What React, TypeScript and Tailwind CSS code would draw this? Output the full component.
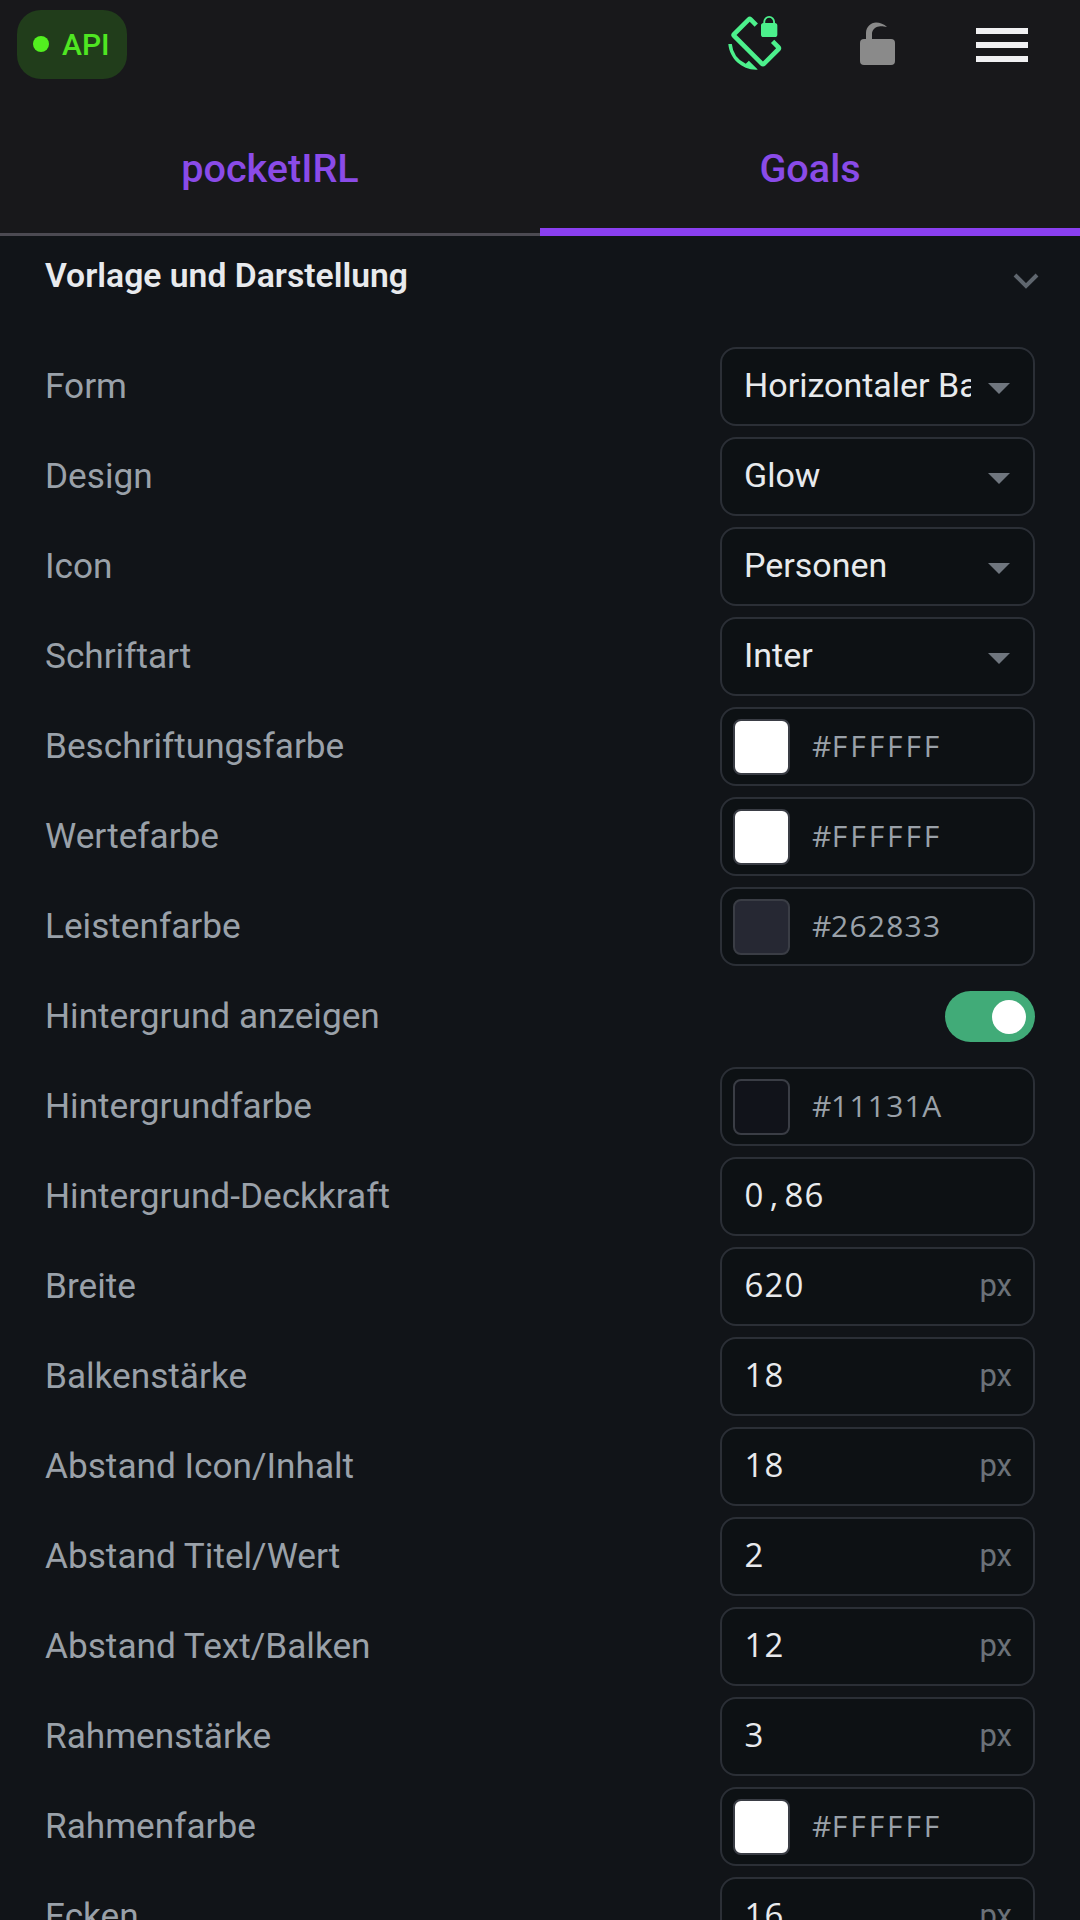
import { MdScreenLockRotation } from "react-icons/md";

type Row =
  | { label: string; kind: "select"; value: string }
  | { label: string; kind: "color"; value: string; swatch: string }
  | { label: string; kind: "toggle" }
  | { label: string; kind: "number"; value: string; unit?: string };

const rows: Row[] = [
  { label: "Form", kind: "select", value: "Horizontaler Balken" },
  { label: "Design", kind: "select", value: "Glow" },
  { label: "Icon", kind: "select", value: "Personen" },
  { label: "Schriftart", kind: "select", value: "Inter" },
  { label: "Beschriftungsfarbe", kind: "color", value: "#FFFFFF", swatch: "bg-white" },
  { label: "Wertefarbe", kind: "color", value: "#FFFFFF", swatch: "bg-white" },
  { label: "Leistenfarbe", kind: "color", value: "#262833", swatch: "bg-[#262833]" },
  { label: "Hintergrund anzeigen", kind: "toggle" },
  { label: "Hintergrundfarbe", kind: "color", value: "#11131A", swatch: "bg-[#11131a]" },
  { label: "Hintergrund-Deckkraft", kind: "number", value: "0,86" },
  { label: "Breite", kind: "number", value: "620", unit: "px" },
  { label: "Balkenstärke", kind: "number", value: "18", unit: "px" },
  { label: "Abstand Icon/Inhalt", kind: "number", value: "18", unit: "px" },
  { label: "Abstand Titel/Wert", kind: "number", value: "2", unit: "px" },
  { label: "Abstand Text/Balken", kind: "number", value: "12", unit: "px" },
  { label: "Rahmenstärke", kind: "number", value: "3", unit: "px" },
  { label: "Rahmenfarbe", kind: "color", value: "#FFFFFF", swatch: "bg-white" },
  { label: "Ecken", kind: "number", value: "16", unit: "px" },
];

// fixed cells, the app's monospace has a plain zero that none of the installed mono fonts have
function Mono({ text, cell }: { text: string; cell: string }) {
  return (
    <span className="flex font-['Open_Sans',sans-serif]">
      {text.split("").map((ch, i) => (
        <span key={i} className={`${cell} text-center`}>
          {ch}
        </span>
      ))}
    </span>
  );
}

function Control({ row }: { row: Row }) {
  if (row.kind === "toggle") {
    return (
      <div className="ml-auto flex h-[51px] w-[90px] items-center justify-end rounded-full bg-[#41ab78] pr-[9px]">
        <div className="h-[34px] w-[34px] rounded-full bg-white" />
      </div>
    );
  }
  const box = "flex h-[79px] w-full items-center rounded-[16px] border-2 border-[#2b2f36] bg-[#0d1114]";
  if (row.kind === "select") {
    return (
      <div className={`${box} pl-[22px] pr-[23px]`}>
        <span className="mb-[3px] w-[227px] overflow-hidden whitespace-nowrap text-[34px] text-[#e8eaed]">{row.value}</span>
        <span className="ml-auto mt-[4px] h-0 w-0 border-x-[11px] border-t-[11px] border-x-transparent border-t-[#6f767e]" />
      </div>
    );
  }
  if (row.kind === "color") {
    return (
      <div className={`${box} pl-[11px]`}>
        <div className={`h-[56px] w-[57px] rounded-[8px] border-2 border-[#3a3d45] ${row.swatch}`} />
        <div className="mb-[3px] ml-[22px] text-[30px] text-[#9aa1a9]">
          <Mono text={row.value} cell="w-[18.4px]" />
        </div>
      </div>
    );
  }
  return (
    <div className={`${box} pl-[22px] pr-[21px]`}>
      <div className="mb-[3px] text-[33px] text-[#e8eaed]">
        <Mono text={row.value} cell="w-[20px]" />
      </div>
      {row.unit && <span className="ml-auto text-[31px] text-[#6b7178]">{row.unit}</span>}
    </div>
  );
}

export default function App() {
  return (
    <div className="h-[1920px] overflow-hidden bg-[#111418] font-['Roboto',sans-serif]">
      <header className="bg-[#18181b]">
        <div className="flex h-[88px] items-center pl-[17px] pr-[52px]">
          <div className="flex h-[69px] w-[110px] items-center gap-[13px] rounded-[24px] bg-[#213d1b] pl-[16px]">
            <span className="h-[16px] w-[16px] rounded-full bg-[#52f01f]" />
            <span className="text-[30px] font-medium text-[#4fe622]">API</span>
          </div>
          <MdScreenLockRotation className="ml-auto h-[56px] w-[56px] text-[#4cf08c]" />
          <svg viewBox="0 0 36 44" className="ml-[78px] h-[44px] w-[36px]">
            <path d="M6 18V11C6 5 11 0.5 16 0.5C20 0.5 24 2 27 5C23 4 21 4 19 4.5C15 5 12 8 12 12V18Z" fill="#8a8a8a" />
            <rect x="0" y="17" width="35" height="26" rx="4" fill="#8a8a8a" />
          </svg>
          <div className="ml-[80px] mt-[2px] flex w-[52px] flex-col gap-[8px]">
            <div className="h-[6px] bg-[#f0f0f2]" />
            <div className="h-[6px] bg-[#f0f0f2]" />
            <div className="h-[6px] bg-[#f0f0f2]" />
          </div>
        </div>
        <div className="flex">
          <div className="flex h-[148px] w-1/2 items-center justify-center border-b-[3px] border-[#4c4a52] pt-[17px] text-[39.6px] font-medium text-[#8a4be8]">
            pocketIRL
          </div>
          <div className="flex h-[148px] w-1/2 items-center justify-center border-b-[8px] border-[#8a3ff0] pt-[22px] text-[39.6px] font-medium text-[#8a4be8]">
            Goals
          </div>
        </div>
      </header>
      <main className="pl-[45px] pr-[45px]">
        <div className="flex h-[76px] items-center justify-between pt-[5px]">
          <h2 className="text-[33.7px] font-semibold text-[#e8eaed]">Vorlage und Darstellung</h2>
          <svg viewBox="0 0 26 16" className="mr-[-4px] mt-[9px] h-[16px] w-[26px]">
            <path d="M2 2L13 13L24 2" fill="none" stroke="#5f666e" strokeWidth="4" />
          </svg>
        </div>
        <div className="mt-[35px] flex flex-col gap-[11px]">
          {rows.map((row) => (
            <div key={row.label} className="flex h-[79px] items-center justify-between">
              <span className="text-[35.2px] text-[#9aa1a9]">{row.label}</span>
              <div className="w-[315px]">
                <Control row={row} />
              </div>
            </div>
          ))}
        </div>
      </main>
    </div>
  );
}
